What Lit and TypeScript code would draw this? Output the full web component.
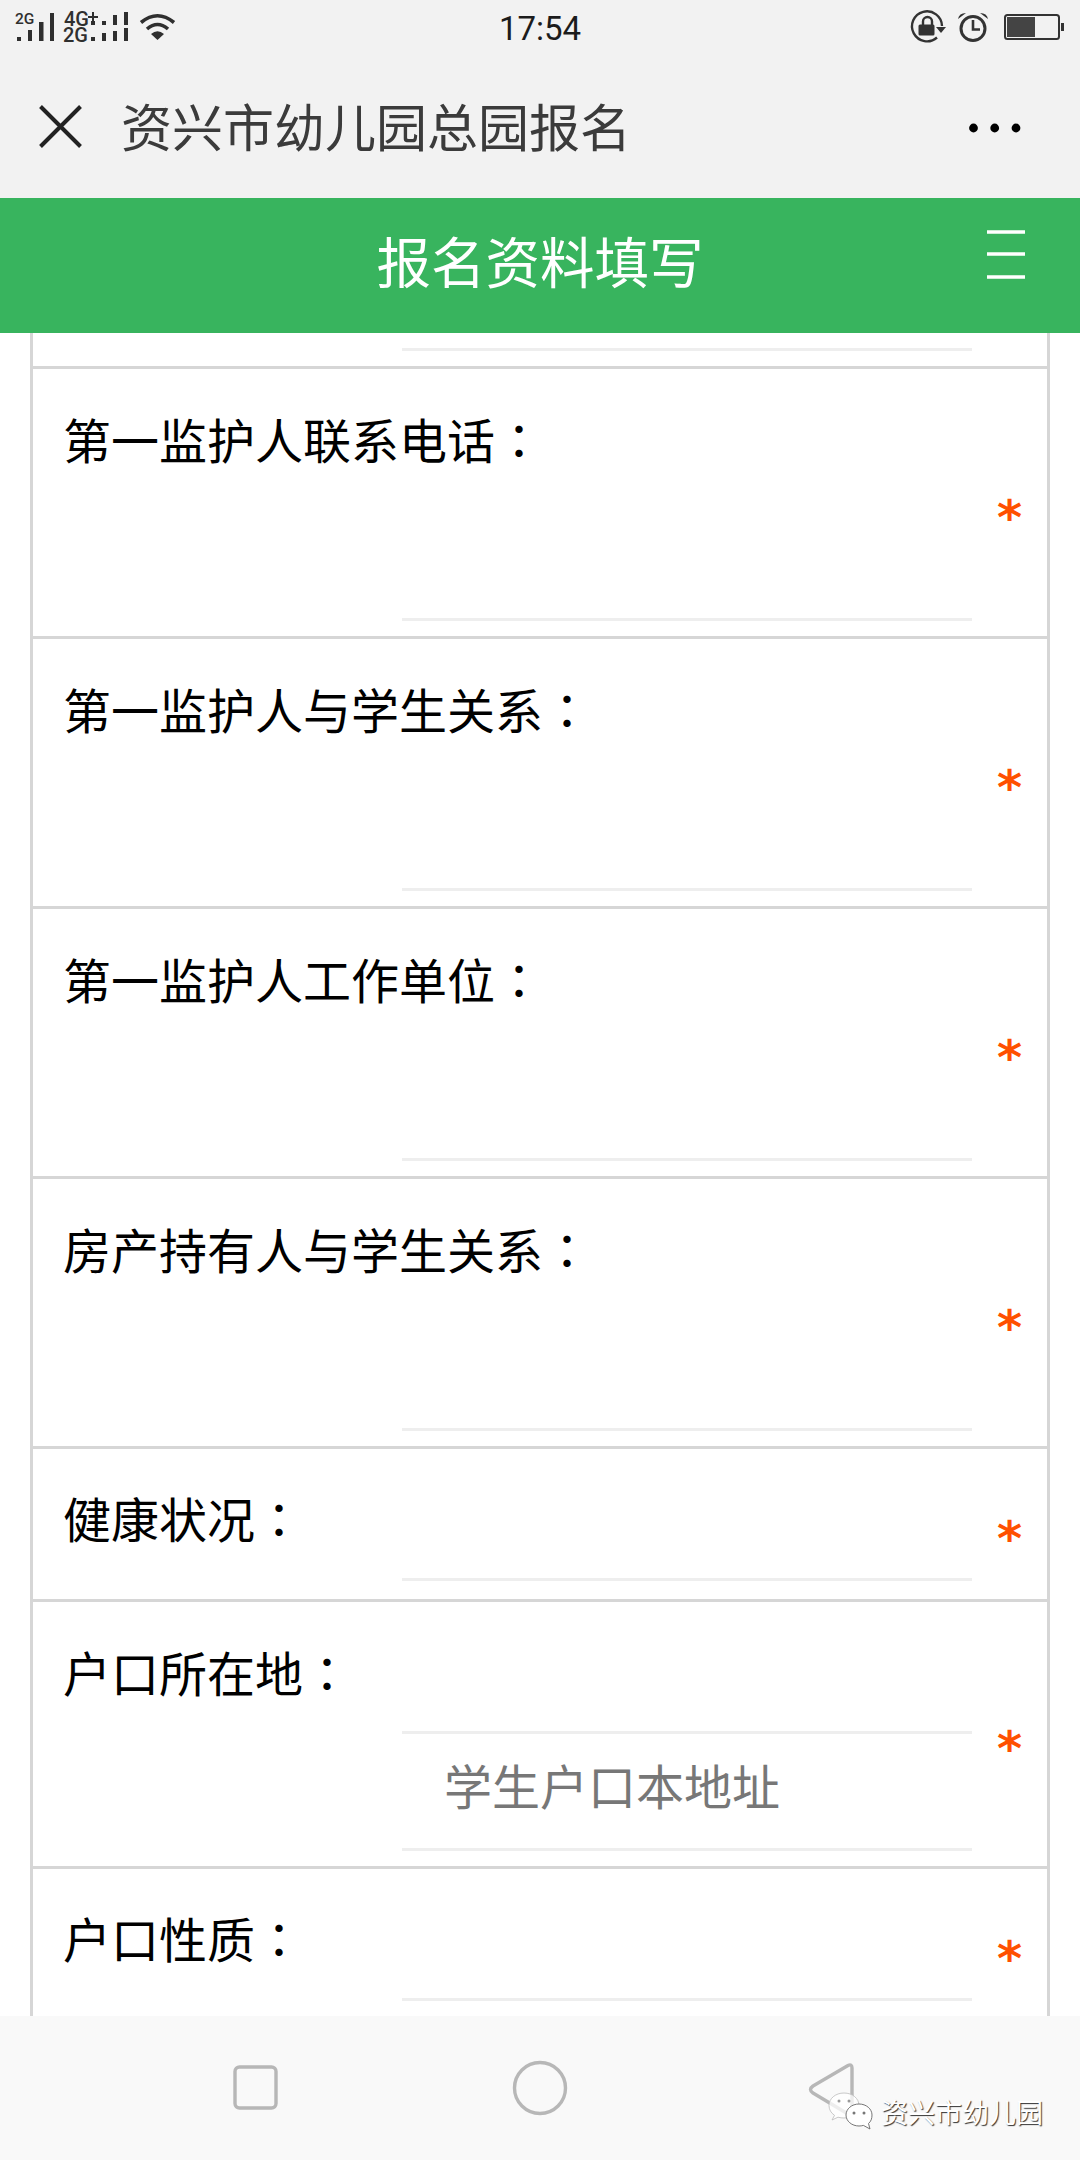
import { LitElement, html, css, svg } from "lit";
import { customElement } from "lit/decorators.js";

type Row = { label: string; kind: "tall" | "short" | "addr"; placeholder?: string };

const ROWS: Row[] = [
  { label: "第一监护人联系电话", kind: "tall" },
  { label: "第一监护人与学生关系", kind: "tall" },
  { label: "第一监护人工作单位", kind: "tall" },
  { label: "房产持有人与学生关系", kind: "tall" },
  { label: "健康状况", kind: "short" },
  { label: "户口所在地", kind: "addr", placeholder: "学生户口本地址" },
  { label: "户口性质", kind: "short" },
];

const leftStatus = svg`
  <text x="15" y="24" class="st" font-size="15.5">2G</text>
  <g fill="#2f2f2f">
    <rect x="17" y="37" width="4" height="4"/><rect x="28" y="30" width="4" height="11"/>
    <rect x="39" y="22" width="4.5" height="19"/><rect x="50" y="13" width="4" height="28"/>
    <rect x="102" y="21" width="4" height="4"/><rect x="113" y="15" width="4" height="10"/><rect x="124" y="12" width="4" height="13"/>
    <rect x="102" y="33" width="4" height="8"/><rect x="113" y="31" width="4" height="10"/><rect x="124" y="28" width="4" height="13"/>
    <rect x="91" y="37" width="4" height="4"/><rect x="91" y="21" width="4" height="4"/>
    <path d="M92 12h2v4h4v2h-4v3h-2v-3h-4v-2h4z"/>
  </g>
  <text x="64" y="26" class="st" font-size="20">4G</text>
  <text x="63" y="42" class="st" font-size="20">2G</text>
  <g fill="none" stroke="#2f2f2f" stroke-width="3.6">
    <path d="M141 22.5 Q157.5 9 174 22.5"/>
    <path d="M147 29 Q157.5 20 168 29"/>
  </g>
  <path d="M151 34 Q157.5 28.5 164 34 L157.5 40Z" fill="#2f2f2f"/>
`;

const rightStatus = svg`
  <g fill="none" stroke="#333" stroke-width="2.4">
    <path d="M942 26 A15 15 0 1 0 937 37.5"/>
    <path d="M923 25 v-3.500 a4.500 4.500 0 0 1 9 0 v3.500"/>
  </g>
  <path d="M936 27h10l-5 6z" fill="#333"/>
  <rect x="918.5" y="24.500" width="16" height="11" rx="1.500" fill="#333"/>
  <circle cx="973" cy="28.5" r="12" fill="none" stroke="#333" stroke-width="3"/>
  <path d="M973 20v9.500h7" fill="none" stroke="#333" stroke-width="2.6"/>
  <path d="M958 19 Q959 13 966 13Z M988 19 Q987 13 980 13Z" fill="#333"/>
  <rect x="1005" y="15" width="54" height="24" rx="2.500" fill="none" stroke="#333" stroke-width="2"/>
  <rect x="1007" y="17" width="28" height="20" fill="#444"/>
  <rect x="1061" y="23" width="3" height="8" fill="#333"/>
`;

@customElement("app-root")
export class AppRoot extends LitElement {
  static styles = css`
    :host {
      display: flex;
      flex-direction: column;
      position: relative;
      width: 1080px;
      height: 2160px;
      overflow: hidden;
      background: #fff;
      font-family: "Noto Sans CJK SC", "Liberation Sans", sans-serif;
      color: #000;
    }
    .status {
      height: 58px;
      background: #f2f2f2;
      display: grid;
      grid-template-columns: 1fr auto 1fr;
      align-items: center;
    }
    .status svg { display: block; }
    .status .l { margin-left: 12px; }
    .status .r { justify-self: end; margin-right: 10px; }
    .st { font-family: Roboto, sans-serif; font-weight: 500; fill: #2f2f2f; }
    .time {
      font: 400 33px/58px Roboto, sans-serif;
      color: #1c1c1c;
    }
    .titlebar {
      height: 140px;
      background: #f2f2f2;
      display: flex;
      align-items: center;
      padding: 0 59px 0 39px;
    }
    .titlebar h1 {
      flex: 1;
      margin: 0 0 7px 39px;
      font-size: 51px;
      font-weight: 400;
      line-height: 60px;
      color: #3b3b3b;
    }
    .titlebar .close { display: block; margin-bottom: 4px; }
    .titlebar .more { display: block; }
    .green {
      height: 135px;
      background: #38b45e;
      display: grid;
      grid-template-columns: 1fr auto 1fr;
      align-items: center;
      color: #fff;
      padding-bottom: 11px;
      box-sizing: border-box;
    }
    .green h2 {
      margin: 0;
      grid-column: 2;
      font-size: 54.5px;
      font-weight: 400;
      line-height: 64px;
    }
    .menu { justify-self: end; margin: 0 54px 12px 0; display: block; }
    .form {
      flex: 1;
      min-height: 0;
      overflow: hidden;
      margin: 0 30px;
      border-left: 3px solid #d6d6d6;
      border-right: 3px solid #d6d6d6;
    }
    .row {
      display: flex;
      box-sizing: border-box;
      border-bottom: 3px solid #d6d6d6;
    }
    .row.stub { height: 36px; }
    .row.tall { height: 270px; }
    .row.short { height: 153px; }
    .row.addr { height: 267px; }
    .main {
      flex: 1;
      display: flex;
      flex-direction: column;
      min-width: 0;
      padding-bottom: 15px;
    }
    .short .main { padding-bottom: 18px; }
    .label {
      margin: 0;
      padding: 33px 0 0 30px;
      font-size: 48px;
      font-weight: 400;
      line-height: 72px;
    }
    .short .label { padding-top: 32px; }
    .colon { font-family: "Noto Sans CJK TC", sans-serif; }
    .field {
      margin: auto 0 0 369px;
      width: 570px;
      box-sizing: border-box;
      border-bottom: 3px solid #eee;
    }
    .addr .field {
      height: 120px;
      border-top: 3px solid #eee;
      padding-left: 42px;
      font-size: 48px;
      line-height: 100px;
      color: #777;
    }
    .star {
      width: 75px;
      height: 48px;
      text-align: center;
      font: italic 700 48px/48px "DejaVu Sans", sans-serif;
      color: #ff5000;
    }
    .tall .star { margin-top: 124px; }
    .short .star { margin-top: 65px; }
    .addr .star { margin-top: 122px; }
    .nav {
      height: 144px;
      background: #f9f9f9;
      display: block;
    }
    .nav svg { display: block; }
    .mark {
      position: absolute;
      left: 826px;
      top: 2090px;
      display: flex;
      align-items: center;
      gap: 5px;
      font-size: 27px;
      line-height: 44px;
      color: #fff;
      text-shadow: 1px 1px 1px #333;
    }
    .mark svg { display: block; }
  `;

  render() {
    return html`
      <div class="status">
        <svg class="l" width="168" height="58" viewBox="12 0 168 58">${leftStatus}</svg>
        <div class="time">17:54</div>
        <svg class="r" width="170" height="58" viewBox="900 0 170 58">${rightStatus}</svg>
      </div>
      <div class="titlebar">
        <svg class="close" width="43" height="43" viewBox="0 0 43 43">
          <path d="M1.500 1.500L41.500 41.500M41.500 1.500L1.500 41.500" stroke="#222" stroke-width="4" fill="none"/>
        </svg>
        <h1>资兴市幼儿园总园报名</h1>
        <svg class="more" width="52" height="10" viewBox="0 0 52 10">
          <circle cx="4.500" cy="5" r="4.400"/><circle cx="25.700" cy="5" r="4.400"/><circle cx="47" cy="5" r="4.400"/>
        </svg>
      </div>
      <div class="green">
        <h2>报名资料填写</h2>
        <svg class="menu" width="40" height="50" viewBox="0 0 40 50">
          <path d="M1 3h38M1 25h38M1 48h38" stroke="#fff" stroke-width="3.6" fill="none"/>
        </svg>
      </div>
      <div class="form">
        <div class="row stub"><div class="main"><div class="field"></div></div></div>
        ${ROWS.map(
          (r) => html`
            <div class="row ${r.kind}">
              <div class="main">
                <p class="label">${r.label}<span class="colon">：</span></p>
                <div class="field">${r.placeholder ?? ""}</div>
              </div>
              <div class="star">*</div>
            </div>
          `
        )}
      </div>
      <div class="nav">
        <svg width="1080" height="144" viewBox="0 2016 1080 144">
          <g fill="none" stroke="#b7b7b7" stroke-width="3.4">
            <rect x="235" y="2067" width="41" height="41" rx="4.500"/>
            <circle cx="540" cy="2088" r="25.500"/>
            <path d="M848 2065.500 L813 2086 Q808 2089.500 813 2093 L848 2114 Q852 2116 852 2112 V2068 Q852 2063.500 848 2065.500Z" stroke-linejoin="round"/>
          </g>
        </svg>
      </div>
      <div class="mark">
        <svg width="50" height="44" viewBox="0 0 50 44">
          <path d="M18 3C9.500 3 3 8.500 3 15.500c0 4 2 7.500 5.500 9.800L6 30l6-2.800c2 .6 4 .8 6 .8 8.500 0 15-5.500 15-12.500S26.500 3 18 3z" fill="#fff" fill-opacity=".75" stroke="#bbb" stroke-width=".8"/>
          <path d="M33 14c-7.200 0-13 4.900-13 11s5.800 11 13 11c1.600 0 3-.2 4.400-.6L44 39l-1.500-5.500C45 31.500 46 28.500 46 25c0-6.100-5.800-11-13-11z" fill="#fff" stroke="#666" stroke-width=".9"/>
          <g fill="#999"><circle cx="13" cy="11" r="1.500"/><circle cx="23" cy="11" r="1.500"/></g>
          <g fill="#777"><circle cx="28" cy="23" r="1.500"/><circle cx="38" cy="23" r="1.500"/></g>
        </svg>
        <span>资兴市幼儿园</span>
      </div>
    `;
  }
}
